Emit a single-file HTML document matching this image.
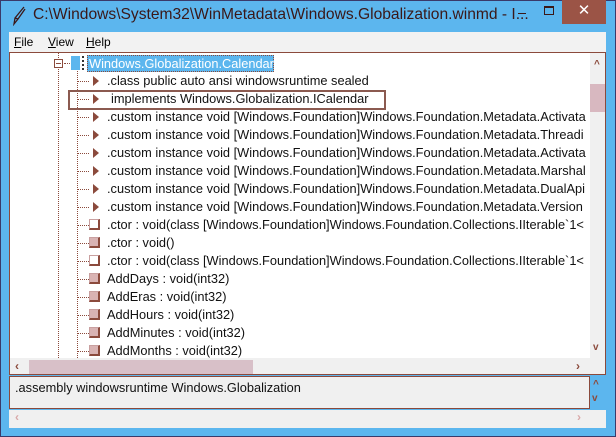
<!DOCTYPE html>
<html><head><style>
*{margin:0;padding:0;box-sizing:border-box}
body{width:616px;height:437px;overflow:hidden;background:#5cb6ee;font-family:"Liberation Sans",sans-serif;position:relative}
.abs{position:absolute}
.title{left:33px;top:6px;font-size:15.6px;color:#3a1818;white-space:nowrap}
.menu{left:9px;top:32px;width:597px;height:20px;background:#f2f2f2;font-size:12px}
.menu span{position:absolute;top:3px}
.tree{left:9px;top:52px;width:597px;height:323px;border:1px solid #8b4a3c;background:#f0f0f0;overflow:hidden}
.white{left:0;top:0;width:580px;height:305px;background:#fff}
.row{position:absolute;height:18px;font-size:12.8px;line-height:18px;white-space:nowrap;color:#111}
.arr{position:absolute;width:0;height:0;border-top:5px solid transparent;border-bottom:5px solid transparent;border-left:6px solid #8b4a3c}
.sq{position:absolute;width:11px;height:11px;background:#d9b3b3;border-right:2px solid #8b4a3c;border-bottom:2px solid #8b4a3c}
.sq.w{background:#fff}
.hd{position:absolute;border-top:1px dotted #8b4a3c;width:11px}
.vd{position:absolute;border-left:1px dotted #8b4a3c}
</style></head><body>
<div class="abs" style="left:0;top:0;width:616px;height:437px;border:1px solid #3a3a6a"></div>
<svg class="abs" style="left:12px;top:6px" width="14" height="20"><path d="M12 1 L3 12 L2 18 L6 13 L13 3 M3 12 L6 13" stroke="#3a1818" fill="none" stroke-width="1.3"/></svg>
<div class="abs title">C:\Windows\System32\WinMetadata\Windows.Globalization.winmd - I...</div>
<div class="abs" style="left:518px;top:13px;width:8px;height:1px;background:#3a1818"></div>
<div class="abs" style="left:544px;top:6px;width:10px;height:9px;border:1px solid #3a1818;border-top-width:2px"></div>
<div class="abs" style="left:562px;top:0;width:44px;height:24px;background:#9b5446;color:#fff;font-size:15px;text-align:center;line-height:22px">✕</div>
<div class="abs menu"><span style="left:5px"><u>F</u>ile</span><span style="left:39px"><u>V</u>iew</span><span style="left:77px"><u>H</u>elp</span></div>
<div class="abs tree">
<div class="abs white"></div>
<div class="vd" style="left:48px;top:0;height:305px"></div>
<div class="vd" style="left:67px;top:18px;height:287px"></div>
<div class="abs" style="left:44px;top:6px;width:9px;height:9px;border:1px solid #8b4a3c;background:#fff"><div style="position:absolute;left:1px;top:3px;width:5px;height:1px;background:#8b4a3c"></div></div>
<div class="hd" style="left:54px;top:10px;width:8px"></div>
<div class="abs" style="left:61px;top:3px;width:9px;height:14px;background:#5cb6ee"></div>
<div class="abs" style="left:70px;top:3px;width:4px;height:14px;border-right:2px dotted #333"></div>
<div class="abs" style="left:77px;top:2px;height:17px;width:187px;background:#5cb6ee;border:1px dotted #8b4a3c;color:#fff;font-size:12.8px;line-height:15px;padding-left:1px;white-space:nowrap">Windows.Globalization.Calendar</div>
<div class="abs" style="left:58px;top:37px;width:318px;height:20px;border:2px solid #8b5a50"></div>
<div id="rows"></div>
<div class="abs" style="left:580px;top:0;width:16px;height:305px;background:#f0f0f0"></div>
<div class="abs" style="left:584px;top:6px;color:#8b4a3c;font-size:10px;font-weight:bold">^</div>
<div class="abs" style="left:580px;top:31px;width:16px;height:28px;background:#d8b8c0"></div>
<div class="abs" style="left:583px;top:289px;color:#8b4a3c;font-size:10px;font-weight:bold">v</div>
<div class="abs" style="left:5px;top:306px;color:#8b4a3c;font-size:12px;font-weight:bold">‹</div>
<div class="abs" style="left:19px;top:307px;width:224px;height:15px;background:#d8c0c8"></div>
<div class="abs" style="left:566px;top:306px;color:#8b4a3c;font-size:12px;font-weight:bold">›</div>
</div>
<div class="abs" style="left:9px;top:376px;width:581px;height:33px;border:1px solid #8b4a3c;background:#f0f0f0;font-size:12.8px;padding:3px 5px;color:#111">.assembly windowsruntime Windows.Globalization</div>
<div class="abs" style="left:593px;top:379px;color:#8b4a3c;font-size:10px;font-weight:bold">^</div>
<div class="abs" style="left:592px;top:393px;color:#8b4a3c;font-size:10px;font-weight:bold">v</div>
<div class="abs" style="left:9px;top:410px;width:597px;height:18px;background:#f0f0f0"></div>
<div class="abs" style="left:15px;top:410px;color:#d8a8a8;font-size:12px;font-weight:bold">‹</div>
<div class="abs" style="left:577px;top:410px;color:#d8a8a8;font-size:12px;font-weight:bold">›</div>
<script>
var items=[["a",".class public auto ansi windowsruntime sealed"],["a","implements Windows.Globalization.ICalendar"],
["a",".custom instance void [Windows.Foundation]Windows.Foundation.Metadata.Activata"],
["a",".custom instance void [Windows.Foundation]Windows.Foundation.Metadata.Threadi"],
["a",".custom instance void [Windows.Foundation]Windows.Foundation.Metadata.Activata"],
["a",".custom instance void [Windows.Foundation]Windows.Foundation.Metadata.Marshal"],
["a",".custom instance void [Windows.Foundation]Windows.Foundation.Metadata.DualApi"],
["a",".custom instance void [Windows.Foundation]Windows.Foundation.Metadata.Version"],
["w",".ctor : void(class [Windows.Foundation]Windows.Foundation.Collections.IIterable`1<"],
["s",".ctor : void()"],
["w",".ctor : void(class [Windows.Foundation]Windows.Foundation.Collections.IIterable`1<"],
["s","AddDays : void(int32)"],["s","AddEras : void(int32)"],["s","AddHours : void(int32)"],
["s","AddMinutes : void(int32)"],["s","AddMonths : void(int32)"]];
var h="";items.forEach(function(it,i){var t=20+i*18;
h+='<div class="hd" style="left:68px;top:'+(t+8)+'px"></div>';
if(it[0]=="a")h+='<div class="arr" style="left:83px;top:'+(t+3)+'px"></div>';
else h+='<div class="sq'+(it[0]=="w"?" w":"")+'" style="left:79px;top:'+(t+2)+'px;border-top:1px solid #c9a0a0;border-left:1px solid #c9a0a0"></div>';
h+='<div class="row" style="left:'+(i==1?101:97)+'px;top:'+(t-1)+'px">'+it[1]+'</div>';});
document.getElementById("rows").outerHTML=h;
</script>
</body></html>
